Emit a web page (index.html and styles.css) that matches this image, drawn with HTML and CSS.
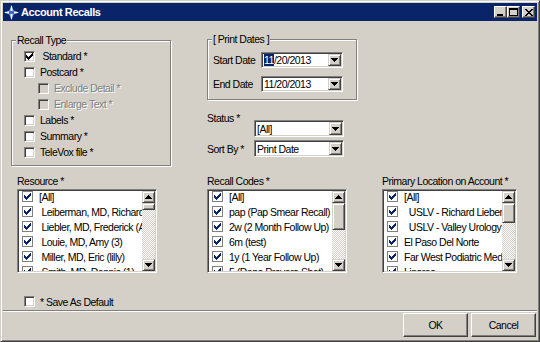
FILE: index.html
```html
<!DOCTYPE html>
<html>
<head>
  <title>Account Recalls</title>
  <link rel="stylesheet" href="styles.css">
</head>
<body>

  <div class="window">
    <div class="titlebar">
      <svg class="app-icon" width="15" height="15" viewBox="0 0 15 15">
        <path d="M7.5 0 L9.5 5.5 L15 7.5 L9.5 9.5 L7.5 15 L5.5 9.5 L0 7.5 L5.5 5.5 Z" fill="#9cc0ee"/>
        <path d="M7 1h1v13H7z M1 7h13v1H1z" fill="#fff"/>
        <path d="M5 6h5v3H5z" fill="#3a6cc8"/>
      </svg>
      <span class="title">Account Recalls</span>
      <div class="controls">
        <span class="ctl"><svg width="9" height="8" viewBox="0 0 9 8"><path d="M1 6h6v2H1z"/></svg></span>
        <span class="ctl"><svg width="9" height="8" viewBox="0 0 9 8"><path fill-rule="evenodd" d="M0 0h9v8H0z M1 2v5h7V2z"/></svg></span>
        <span class="ctl close"><svg width="8" height="7" viewBox="0 0 8 7"><path d="M0 0h2v1H0z M6 0h2v1H6z M1 1h2v1H1z M5 1h2v1H5z M2 2h4v1H2z M3 3h2v1H3z M2 4h4v1H2z M1 5h2v1H1z M5 5h2v1H5z M0 6h2v1H0z M6 6h2v1H6z"/></svg></span>
      </div>
    </div>

    <div class="content">
      <div class="top">
        <div class="group recall-type">
          <div class="group-title">Recall Type</div>
          <div class="rows">
            <div class="check-row">
              <span class="cb"><svg width="7" height="7" viewBox="0 0 7 7"><path d="M6 0h1v1H6z M5 1h2v1H5z M0 2h1v1H0z M4 2h3v1H4z M0 3h2v1H0z M3 3h3v1H3z M0 4h5v1H0z M1 5h3v1H1z M2 6h1v1H2z"/></svg></span>
              <span class="lbl"> Standard *</span>
            </div>
            <div class="check-row">
              <span class="cb"></span>
              <span class="lbl">Postcard *</span>
            </div>
            <div class="check-row sub">
              <span class="cb disabled"></span>
              <span class="lbl disabled">Exclude Detail *</span>
            </div>
            <div class="check-row sub">
              <span class="cb disabled"></span>
              <span class="lbl disabled">Enlarge Text *</span>
            </div>
            <div class="check-row">
              <span class="cb"></span>
              <span class="lbl">Labels *</span>
            </div>
            <div class="check-row">
              <span class="cb"></span>
              <span class="lbl">Summary *</span>
            </div>
            <div class="check-row">
              <span class="cb"></span>
              <span class="lbl">TeleVox file *</span>
            </div>
          </div>
        </div>

        <div class="middle">
          <div class="group print-dates">
            <div class="group-title">[ Print Dates ]</div>
            <div class="date-row first">
              <span class="date-label">Start Date</span>
              <div class="field datebox">
                <span class="field-text"><span class="sel">11</span>/20/2013</span>
                <span class="drop"><svg width="7" height="4" viewBox="0 0 7 4"><path d="M0 0h7v1H6v1H5v1H4v1H3V3H2V2H1V1H0z"/></svg></span>
              </div>
            </div>
            <div class="date-row">
              <span class="date-label">End Date</span>
              <div class="field datebox">
                <span class="field-text">11/20/2013</span>
                <span class="drop"><svg width="7" height="4" viewBox="0 0 7 4"><path d="M0 0h7v1H6v1H5v1H4v1H3V3H2V2H1V1H0z"/></svg></span>
              </div>
            </div>
          </div>

          <div class="field-row status-row">
            <span class="field-label">Status *</span>
            <div class="field combo">
              <span class="field-text">[All]</span>
              <span class="drop"><svg width="7" height="4" viewBox="0 0 7 4"><path d="M0 0h7v1H6v1H5v1H4v1H3V3H2V2H1V1H0z"/></svg></span>
            </div>
          </div>
          <div class="field-row sort-row">
            <span class="field-label">Sort By *</span>
            <div class="field combo">
              <span class="field-text">Print Date</span>
              <span class="drop"><svg width="7" height="4" viewBox="0 0 7 4"><path d="M0 0h7v1H6v1H5v1H4v1H3V3H2V2H1V1H0z"/></svg></span>
            </div>
          </div>
        </div>
      </div>

      <div class="lists">
        <div class="list-col resource">
          <div class="list-label">Resource *</div>
          <div class="listbox">
            <div class="items">
              <div class="item"><span class="cb"><svg width="7" height="7" viewBox="0 0 7 7"><path d="M6 0h1v1H6z M5 1h2v1H5z M0 2h1v1H0z M4 2h3v1H4z M0 3h2v1H0z M3 3h3v1H3z M0 4h5v1H0z M1 5h3v1H1z M2 6h1v1H2z"/></svg></span><span class="txt">[All]</span></div>
              <div class="item"><span class="cb"><svg width="7" height="7" viewBox="0 0 7 7"><path d="M6 0h1v1H6z M5 1h2v1H5z M0 2h1v1H0z M4 2h3v1H4z M0 3h2v1H0z M3 3h3v1H3z M0 4h5v1H0z M1 5h3v1H1z M2 6h1v1H2z"/></svg></span><span class="txt"> Leiberman, MD, Richard</span></div>
              <div class="item"><span class="cb"><svg width="7" height="7" viewBox="0 0 7 7"><path d="M6 0h1v1H6z M5 1h2v1H5z M0 2h1v1H0z M4 2h3v1H4z M0 3h2v1H0z M3 3h3v1H3z M0 4h5v1H0z M1 5h3v1H1z M2 6h1v1H2z"/></svg></span><span class="txt"> Liebler, MD, Frederick (A)</span></div>
              <div class="item"><span class="cb"><svg width="7" height="7" viewBox="0 0 7 7"><path d="M6 0h1v1H6z M5 1h2v1H5z M0 2h1v1H0z M4 2h3v1H4z M0 3h2v1H0z M3 3h3v1H3z M0 4h5v1H0z M1 5h3v1H1z M2 6h1v1H2z"/></svg></span><span class="txt"> Louie, MD, Amy (3)</span></div>
              <div class="item"><span class="cb"><svg width="7" height="7" viewBox="0 0 7 7"><path d="M6 0h1v1H6z M5 1h2v1H5z M0 2h1v1H0z M4 2h3v1H4z M0 3h2v1H0z M3 3h3v1H3z M0 4h5v1H0z M1 5h3v1H1z M2 6h1v1H2z"/></svg></span><span class="txt"> Miller, MD, Eric (lilly)</span></div>
              <div class="item"><span class="cb"><svg width="7" height="7" viewBox="0 0 7 7"><path d="M6 0h1v1H6z M5 1h2v1H5z M0 2h1v1H0z M4 2h3v1H4z M0 3h2v1H0z M3 3h3v1H3z M0 4h5v1H0z M1 5h3v1H1z M2 6h1v1H2z"/></svg></span><span class="txt"> Smith, MD, Dennis (1)</span></div>
            </div>
            <div class="scrollbar">
              <span class="sb-btn"><svg width="7" height="4" viewBox="0 0 7 4"><path d="M3 0h1v1h1v1h1v1h1v1H0V3h1V2h1V1h1z"/></svg></span>
              <span class="thumb thumb-s"></span>
              <span class="track"></span>
              <span class="sb-btn"><svg width="7" height="4" viewBox="0 0 7 4"><path d="M0 0h7v1H6v1H5v1H4v1H3V3H2V2H1V1H0z"/></svg></span>
            </div>
          </div>
        </div>

        <div class="list-col codes">
          <div class="list-label">Recall Codes *</div>
          <div class="listbox">
            <div class="items">
              <div class="item"><span class="cb"><svg width="7" height="7" viewBox="0 0 7 7"><path d="M6 0h1v1H6z M5 1h2v1H5z M0 2h1v1H0z M4 2h3v1H4z M0 3h2v1H0z M3 3h3v1H3z M0 4h5v1H0z M1 5h3v1H1z M2 6h1v1H2z"/></svg></span><span class="txt">[All]</span></div>
              <div class="item"><span class="cb"><svg width="7" height="7" viewBox="0 0 7 7"><path d="M6 0h1v1H6z M5 1h2v1H5z M0 2h1v1H0z M4 2h3v1H4z M0 3h2v1H0z M3 3h3v1H3z M0 4h5v1H0z M1 5h3v1H1z M2 6h1v1H2z"/></svg></span><span class="txt">pap (Pap Smear Recall)</span></div>
              <div class="item"><span class="cb"><svg width="7" height="7" viewBox="0 0 7 7"><path d="M6 0h1v1H6z M5 1h2v1H5z M0 2h1v1H0z M4 2h3v1H4z M0 3h2v1H0z M3 3h3v1H3z M0 4h5v1H0z M1 5h3v1H1z M2 6h1v1H2z"/></svg></span><span class="txt">2w (2 Month Follow Up)</span></div>
              <div class="item"><span class="cb"><svg width="7" height="7" viewBox="0 0 7 7"><path d="M6 0h1v1H6z M5 1h2v1H5z M0 2h1v1H0z M4 2h3v1H4z M0 3h2v1H0z M3 3h3v1H3z M0 4h5v1H0z M1 5h3v1H1z M2 6h1v1H2z"/></svg></span><span class="txt">6m (test)</span></div>
              <div class="item"><span class="cb"><svg width="7" height="7" viewBox="0 0 7 7"><path d="M6 0h1v1H6z M5 1h2v1H5z M0 2h1v1H0z M4 2h3v1H4z M0 3h2v1H0z M3 3h3v1H3z M0 4h5v1H0z M1 5h3v1H1z M2 6h1v1H2z"/></svg></span><span class="txt">1y (1 Year Follow Up)</span></div>
              <div class="item"><span class="cb"><svg width="7" height="7" viewBox="0 0 7 7"><path d="M6 0h1v1H6z M5 1h2v1H5z M0 2h1v1H0z M4 2h3v1H4z M0 3h2v1H0z M3 3h3v1H3z M0 4h5v1H0z M1 5h3v1H1z M2 6h1v1H2z"/></svg></span><span class="txt">5 (Depo Provera Shot)</span></div>
            </div>
            <div class="scrollbar">
              <span class="sb-btn"><svg width="7" height="4" viewBox="0 0 7 4"><path d="M3 0h1v1h1v1h1v1h1v1H0V3h1V2h1V1h1z"/></svg></span>
              <span class="thumb thumb-l"></span>
              <span class="track"></span>
              <span class="sb-btn"><svg width="7" height="4" viewBox="0 0 7 4"><path d="M0 0h7v1H6v1H5v1H4v1H3V3H2V2H1V1H0z"/></svg></span>
            </div>
          </div>
        </div>

        <div class="list-col location">
          <div class="list-label">Primary Location on Account *</div>
          <div class="listbox">
            <div class="items">
              <div class="item"><span class="cb"><svg width="7" height="7" viewBox="0 0 7 7"><path d="M6 0h1v1H6z M5 1h2v1H5z M0 2h1v1H0z M4 2h3v1H4z M0 3h2v1H0z M3 3h3v1H3z M0 4h5v1H0z M1 5h3v1H1z M2 6h1v1H2z"/></svg></span><span class="txt">[All]</span></div>
              <div class="item"><span class="cb"><svg width="7" height="7" viewBox="0 0 7 7"><path d="M6 0h1v1H6z M5 1h2v1H5z M0 2h1v1H0z M4 2h3v1H4z M0 3h2v1H0z M3 3h3v1H3z M0 4h5v1H0z M1 5h3v1H1z M2 6h1v1H2z"/></svg></span><span class="txt">  USLV - Richard Lieberman</span></div>
              <div class="item"><span class="cb"><svg width="7" height="7" viewBox="0 0 7 7"><path d="M6 0h1v1H6z M5 1h2v1H5z M0 2h1v1H0z M4 2h3v1H4z M0 3h2v1H0z M3 3h3v1H3z M0 4h5v1H0z M1 5h3v1H1z M2 6h1v1H2z"/></svg></span><span class="txt">  USLV - Valley Urology Group</span></div>
              <div class="item"><span class="cb"><svg width="7" height="7" viewBox="0 0 7 7"><path d="M6 0h1v1H6z M5 1h2v1H5z M0 2h1v1H0z M4 2h3v1H4z M0 3h2v1H0z M3 3h3v1H3z M0 4h5v1H0z M1 5h3v1H1z M2 6h1v1H2z"/></svg></span><span class="txt">El Paso Del Norte</span></div>
              <div class="item"><span class="cb"><svg width="7" height="7" viewBox="0 0 7 7"><path d="M6 0h1v1H6z M5 1h2v1H5z M0 2h1v1H0z M4 2h3v1H4z M0 3h2v1H0z M3 3h3v1H3z M0 4h5v1H0z M1 5h3v1H1z M2 6h1v1H2z"/></svg></span><span class="txt">Far West Podiatric Medicine</span></div>
              <div class="item"><span class="cb"><svg width="7" height="7" viewBox="0 0 7 7"><path d="M6 0h1v1H6z M5 1h2v1H5z M0 2h1v1H0z M4 2h3v1H4z M0 3h2v1H0z M3 3h3v1H3z M0 4h5v1H0z M1 5h3v1H1z M2 6h1v1H2z"/></svg></span><span class="txt">Linares</span></div>
            </div>
            <div class="scrollbar">
              <span class="sb-btn"><svg width="7" height="4" viewBox="0 0 7 4"><path d="M3 0h1v1h1v1h1v1h1v1H0V3h1V2h1V1h1z"/></svg></span>
              <span class="thumb thumb-m"></span>
              <span class="track"></span>
              <span class="sb-btn"><svg width="7" height="4" viewBox="0 0 7 4"><path d="M0 0h7v1H6v1H5v1H4v1H3V3H2V2H1V1H0z"/></svg></span>
            </div>
          </div>
        </div>
      </div>

      <div class="check-row save-row">
        <span class="cb"></span>
        <span class="lbl">* Save As Default</span>
      </div>
    </div>

    <div class="footer">
      <button class="button">OK</button>
      <button class="button">Cancel</button>
    </div>
  </div>

</body>
</html>
```

FILE: styles.css
```css
body {
  margin: 0;
  font-family: "Liberation Sans", Arial, sans-serif;
  font-size: 10.5px;
  letter-spacing: -0.5px;
  color: #000;
  background-color: #d4d0c8;
}

.window {
  width: 540px;
  height: 342px;
  box-sizing: border-box;
  display: flex;
  flex-direction: column;
  padding: 2px;
  background-color: #d4d0c8;
  border: 1px solid;
  border-color: #d4d0c8 #404040 #404040 #d4d0c8;
  box-shadow: inset 1px 1px #fff, inset -1px -1px #808080;
  white-space: nowrap;
}

/* title bar */
.titlebar {
  height: 18px;
  flex: none;
  display: flex;
  align-items: center;
  background-color: #0a246a;
  color: #fff;
}

.app-icon {
  margin-left: 1px;
  flex: none;
}

.title {
  margin-left: 2px;
  font-weight: bold;
  font-size: 11px;
  letter-spacing: -0.4px;
}

.controls {
  margin-left: auto;
  padding-right: 2px;
  display: flex;
}

.ctl {
  width: 13px;
  height: 12px;
  box-sizing: border-box;
  display: flex;
  align-items: center;
  justify-content: center;
  background-color: #d4d0c8;
  border: 1px solid;
  border-color: #fff #404040 #404040 #fff;
  box-shadow: inset -1px -1px #808080;
}

.ctl svg {
  display: block;
  fill: #000;
  shape-rendering: crispEdges;
}

.ctl.close {
  margin-left: 2px;
}

/* main area */
.content {
  flex: 1;
  min-height: 0;
  overflow: hidden;
  padding: 13px 8px 0 8px;
}

.top {
  display: flex;
  align-items: flex-start;
}

.group {
  box-sizing: border-box;
  border: 1px solid #808080;
  box-shadow: inset 1px 1px #fff, 1px 1px #fff;
}

.group-title {
  display: table;
  margin: -7px 0 0 4px;
  padding: 0 1px;
  line-height: 13px;
  background-color: #d4d0c8;
}

.recall-type {
  width: 160px;
  height: 126px;
  margin-top: 6px;
}

.rows {
  padding-top: 1px;
}

.check-row {
  height: 16px;
  display: flex;
  align-items: center;
  padding-left: 12px;
}

.check-row.sub {
  padding-left: 26px;
}

.lbl {
  margin-left: 5px;
  white-space: pre;
}

.lbl.disabled {
  color: #808080;
  text-shadow: 1px 1px #fff;
}

.cb {
  width: 11px;
  height: 11px;
  box-sizing: border-box;
  flex: none;
  padding: 1px;
  background-color: #fff;
  border: 1px solid;
  border-color: #808080 #fff #fff #808080;
  box-shadow: inset 1px 1px #404040, inset -1px -1px #d4d0c8;
}

.cb svg {
  display: block;
  fill: #000;
  shape-rendering: crispEdges;
}

.cb.disabled {
  background-color: #d4d0c8;
}

/* middle column */
.middle {
  width: 150px;
  margin-left: 36px;
}

.print-dates {
  height: 61px;
  margin-top: 5px;
}

.date-row {
  display: flex;
  align-items: center;
  height: 16px;
  margin-top: 8px;
  padding-left: 5px;
}

.date-row.first {
  margin-top: 6px;
}

.date-label {
  width: 48px;
  flex: none;
}

.field {
  height: 16px;
  box-sizing: border-box;
  display: flex;
  align-items: center;
  padding: 1px;
  background-color: #fff;
  border: 1px solid;
  border-color: #808080 #fff #fff #808080;
  box-shadow: inset 1px 1px #404040, inset -1px -1px #d4d0c8;
}

.datebox {
  width: 82px;
}

.combo {
  width: 90px;
  height: 17px;
}

.field-text {
  flex: 1;
  padding-left: 1px;
  line-height: 12px;
}

.sel {
  background-color: #0a246a;
  color: #fff;
}

.drop,
.sb-btn,
.thumb {
  box-sizing: border-box;
  background-color: #d4d0c8;
  border: 1px solid;
  border-color: #d4d0c8 #404040 #404040 #d4d0c8;
  box-shadow: inset 1px 1px #fff, inset -1px -1px #808080;
}

.drop {
  width: 13px;
  height: 100%;
  display: flex;
  align-items: center;
  justify-content: center;
}

.drop svg,
.sb-btn svg {
  display: block;
  fill: #000;
  shape-rendering: crispEdges;
}

.field-row {
  display: flex;
}

.field-label {
  width: 47px;
  flex: none;
}

.status-row {
  margin-top: 12px;
  align-items: flex-start;
}

.status-row .field-label {
  line-height: 12px;
}

.status-row .combo {
  margin-top: 8px;
}

.sort-row {
  margin-top: 3px;
  align-items: center;
}

/* list boxes */
.lists {
  display: flex;
  margin: 9px 0 0 6px;
}

.list-col {
  width: 140px;
}

.list-col.codes {
  margin-left: 50px;
}

.list-col.location {
  width: 135px;
  margin-left: 35px;
}

.list-label {
  line-height: 13px;
  margin-bottom: 1px;
}

.listbox {
  height: 84px;
  box-sizing: border-box;
  display: flex;
  padding: 1px;
  background-color: #fff;
  border: 1px solid;
  border-color: #808080 #fff #fff #808080;
  box-shadow: inset 1px 1px #404040, inset -1px -1px #d4d0c8;
}

.items {
  flex: 1;
  min-width: 0;
  overflow: hidden;
  padding-left: 3px;
}

.item {
  height: 15px;
  display: flex;
  align-items: center;
  white-space: pre;
}

.item:first-child {
  margin-top: -2px;
}

.item .cb {
  border: 1px solid #808080;
  box-shadow: none;
}

.item .cb svg {
  fill: #0a246a;
}

.txt {
  margin-left: 6px;
}

.scrollbar {
  width: 13px;
  flex: none;
  display: flex;
  flex-direction: column;
}

.sb-btn {
  height: 12px;
  flex: none;
  display: flex;
  align-items: center;
  justify-content: center;
}

.thumb {
  flex: none;
}

.thumb-s { height: 7px; }
.thumb-m { height: 20px; }
.thumb-l { height: 27px; }

.track {
  flex: 1;
  background-color: #fff;
  background-image: repeating-conic-gradient(#d4d0c8 0 25%, #fff 0 50%);
  background-size: 2px 2px;
}

.save-row {
  margin-top: 22px;
  height: 13px;
  padding-left: 13px;
}

/* bottom buttons */
.footer {
  flex: none;
  display: flex;
  justify-content: flex-end;
  gap: 3px;
  padding: 2px 1px 2px 0;
  border-top: 1px solid #808080;
  box-shadow: inset 0 1px #fff;
}

.button {
  width: 65px;
  height: 24px;
  margin: 0;
  padding: 0;
  font-family: "Liberation Sans", Arial, sans-serif;
  font-size: 10.5px;
  letter-spacing: -0.5px;
  color: #000;
  background-color: #d4d0c8;
  border: 1px solid;
  border-color: #fff #404040 #404040 #fff;
  box-shadow: inset -1px -1px #808080;
  border-radius: 0;
}
```
